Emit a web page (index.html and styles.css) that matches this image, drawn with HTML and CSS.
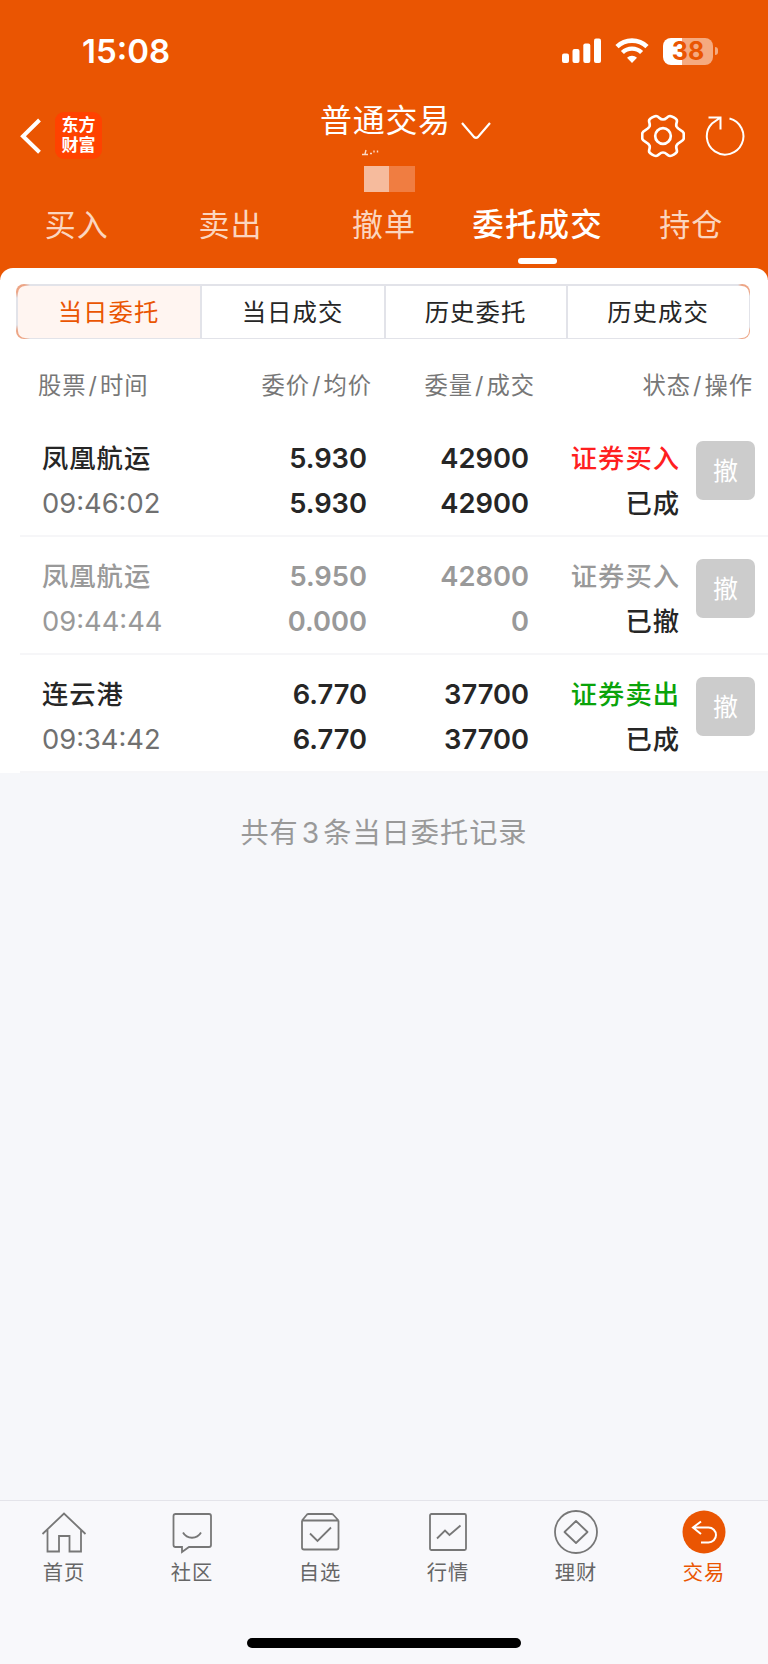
FILE: index.html
```
<!DOCTYPE html>
<html lang="zh-CN">

<head>
  <meta charset="UTF-8">
  <meta name="viewport" content="width=device-width, initial-scale=1.0">
  <title>委托成交</title>
  <link rel="stylesheet" href="styles.css">
</head>

<body>
  <div class="app">
    <header class="header">
      <div class="status-bar">
        <span class="time">15:08</span>
        <div class="status-icons">
          <svg class="signal" width="40" height="26" viewBox="0 0 40 26" fill="#fff">
            <rect x="0" y="15.5" width="7" height="9.5" rx="2"/>
            <rect x="10.5" y="11" width="7" height="14" rx="2"/>
            <rect x="21.3" y="5.5" width="7" height="19.5" rx="2"/>
            <rect x="32" y="0.5" width="7" height="24.5" rx="2"/>
          </svg>
          <svg class="wifi" width="34" height="26" viewBox="0 0 34 26" fill="none" stroke="#fff">
            <path d="M2 8.7a21.5 21.5 0 0 1 30 0" stroke-width="4.6"/>
            <path d="M7.4 14.5a13.8 13.8 0 0 1 19.2 0" stroke-width="4.4"/>
            <path d="M17 25l-5-5.2a7.2 7.2 0 0 1 10 0z" fill="#fff" stroke="none"/>
          </svg>
          <div class="battery"><span>38</span></div>
          <div class="battery-cap"></div>
        </div>
      </div>

      <div class="nav">
        <div class="nav-left">
          <svg width="22" height="36" viewBox="0 0 22 36" fill="none" stroke="#fff" stroke-width="4">
            <path d="M20.500 2L4 18.200l16.500 16"/>
          </svg>
          <div class="logo"><span>东方</span><span>财富</span></div>
        </div>
        <div class="nav-center">
          <div class="nav-title">
            <span>普通交易</span>
            <svg width="30" height="18" viewBox="0 0 30 18" fill="none" stroke="#fff" stroke-width="2.200">
              <path d="M1 1l12 14q2 1.500 4 0L29 1"/>
            </svg>
          </div>
          <svg class="account" width="54" height="44" viewBox="0 0 54 44">
            <path d="M1 6.500h6M5 2l-1 4M9 5.500h2M13 2.500v2M16.500 2.500v2" fill="none" stroke="#fbd9c5" stroke-width="1.400"/>
            <rect x="3" y="18" width="25" height="26" fill="#f6bb9d"/>
            <rect x="28" y="18" width="26" height="26" fill="#f07d41"/>
          </svg>
        </div>
        <div class="nav-right">
          <svg width="44" height="44" viewBox="0 0 44 44" fill="none" stroke="#fff" stroke-width="2.700" stroke-linejoin="round">
            <path d="M22 5.500C25.500 5.500 26 2.200 29 2C31 2.200 34.800 4.300 35.800 6C36.500 8.500 34.500 9.500 35.500 12.500C37.500 16.500 42 16 42.800 19.500V24.500C42 28 37.500 27.500 35.500 31.500C34.500 34.500 36.500 35.500 35.800 38C34.800 39.700 31 41.800 29 42C26 41.800 25.500 38.500 22 38.500C18.500 38.500 18 41.800 15 42C13 41.800 9.200 39.700 8.200 38C7.500 35.500 9.500 34.500 8.500 31.500C6.500 27.500 2 28 1.200 24.500V19.500C2 16 6.500 16.500 8.500 12.500C9.500 9.500 7.500 8.500 8.200 6C9.200 4.300 13 2.200 15 2C18 2.200 18.500 5.500 22 5.500Z"/>
            <circle cx="22" cy="22" r="7.800"/>
          </svg>
          <svg width="42" height="42" viewBox="0 0 42 42" fill="none" stroke="#fff" stroke-width="2">
            <path d="M26.500 3.500A18.300 18.300 0 1 1 9 8.500L17.500 2.500M5.500 2.500H17.500V14.500"/>
          </svg>
        </div>
      </div>

      <div class="tabs">
        <div class="tab">买入</div>
        <div class="tab">卖出</div>
        <div class="tab">撤单</div>
        <div class="tab active">委托成交</div>
        <div class="tab">持仓</div>
      </div>
    </header>

    <main class="panel">
      <div class="segments">
        <div class="segment selected">当日委托</div>
        <div class="segment">当日成交</div>
        <div class="segment">历史委托</div>
        <div class="segment">历史成交</div>
      </div>

      <div class="list-head">
        <span>股票<i>/</i>时间</span>
        <span>委价<i>/</i>均价</span>
        <span>委量<i>/</i>成交</span>
        <span>状态<i>/</i>操作</span>
      </div>

      <div class="order">
        <div class="cell"><b>凤凰航运</b><span class="order-time">09:46:02</span></div>
        <div class="cell num"><b>5.930</b><b>5.930</b></div>
        <div class="cell num"><b>42900</b><b>42900</b></div>
        <div class="cell state"><b class="buy">证券买入</b><b>已成</b></div>
        <div class="cancel">撤</div>
      </div>
      <div class="order cancelled">
        <div class="cell"><b>凤凰航运</b><span class="order-time">09:44:44</span></div>
        <div class="cell num"><b>5.950</b><b>0.000</b></div>
        <div class="cell num"><b>42800</b><b>0</b></div>
        <div class="cell state"><b class="buy">证券买入</b><b>已撤</b></div>
        <div class="cancel">撤</div>
      </div>
      <div class="order">
        <div class="cell"><b>连云港</b><span class="order-time">09:34:42</span></div>
        <div class="cell num"><b>6.770</b><b>6.770</b></div>
        <div class="cell num"><b>37700</b><b>37700</b></div>
        <div class="cell state"><b class="sell">证券卖出</b><b>已成</b></div>
        <div class="cancel">撤</div>
      </div>
    </main>

    <p class="summary">共有<span>3</span>条当日委托记录</p>

    <footer class="tab-bar">
      <div class="bar-items">
        <div class="bar-item">
          <svg width="46" height="46" viewBox="0 0 46 46">
            <path d="M1.500 24L23 3.500L44.500 24M6.500 20v21.500H18V26h10.500v15.500H40V20"/>
          </svg>
          <span>首页</span>
        </div>
        <div class="bar-item">
          <svg width="46" height="46" viewBox="0 0 46 46">
            <path d="M6 4h34q2 0 2 2v29q0 2-2 2H20l-7 5v-5H6.500q-2 0-2-2V6q0-2 2-2z"/>
            <path d="M14 22.500c4 7 14 7 18 0"/>
          </svg>
          <span>社区</span>
        </div>
        <div class="bar-item">
          <svg width="46" height="46" viewBox="0 0 46 46">
            <path d="M5 10.500v27q0 2 2 2h32.500q2 0 2-2v-27M5 10.500h36.500M5 10.500l5-6q.5-.5 1.500-.5h23q1 0 1.500.5l5.500 6M13 23.500l7.500 7.500L34 17.500"/>
          </svg>
          <span>自选</span>
        </div>
        <div class="bar-item">
          <svg width="46" height="46" viewBox="0 0 46 46">
            <rect x="5" y="4" width="36" height="36" rx="1.500"/>
            <path d="M12 28.500l8-8 4.500 4.500L35.500 15.500"/>
          </svg>
          <span>行情</span>
        </div>
        <div class="bar-item">
          <svg width="46" height="46" viewBox="0 0 46 46">
            <circle cx="23" cy="22" r="21"/>
            <path d="M23 11l11.500 11L23 33L11.500 22z" stroke-linejoin="round"/>
          </svg>
          <span>理财</span>
        </div>
        <div class="bar-item current">
          <svg width="46" height="46" viewBox="0 0 46 46">
            <circle class="disc" cx="23" cy="22" r="21.500"/>
            <path class="arrow" d="M20 11.500L12 17.500l8 6.500M12 17.500h15.500a7.500 7.500 0 0 1 0 15H20"/>
          </svg>
          <span>交易</span>
        </div>
      </div>
      <div class="home-indicator"></div>
    </footer>
  </div>
</body>

</html>
```

FILE: styles.css
```
* {
  box-sizing: border-box;
}

body {
  margin: 0;
  font-family: Inter, "Noto Sans CJK SC", sans-serif;
  color: #262626;
}

svg {
  display: block;
  flex-shrink: 0;
}

.app {
  width: 768px;
  height: 1664px;
  display: flex;
  flex-direction: column;
  background: #f6f7fa;
  overflow: hidden;
}

/* header */
.header {
  height: 280px;
  flex-shrink: 0;
  background: #ea5502;
  color: #fff;
}

.status-bar {
  height: 102px;
  padding: 0 50px 0 82px;
  display: flex;
  align-items: center;
  justify-content: space-between;
}

.time {
  font-size: 33px;
  font-weight: 600;
}

.status-icons {
  display: flex;
  align-items: center;
}

.wifi {
  margin-left: 13px;
}

.battery {
  width: 50px;
  height: 27px;
  margin-left: 14px;
  border-radius: 8px;
  background: linear-gradient(90deg, #fff 39%, #f5aa80 39%);
  color: #ea5502;
  font-size: 25px;
  font-weight: 700;
  line-height: 27px;
  text-align: center;
}

.battery-cap {
  width: 3px;
  height: 8px;
  margin-left: 2px;
  border-radius: 0 4px 4px 0;
  background: #f5aa80;
}

.nav {
  height: 92px;
  display: grid;
  grid-template-columns: 320px 1fr 127px;
}

.nav-left {
  height: 68px;
  padding-left: 19px;
  display: flex;
  align-items: center;
  gap: 14px;
}

.logo {
  width: 47px;
  height: 47px;
  margin-top: -2px;
  display: flex;
  flex-direction: column;
  align-items: center;
  justify-content: center;
  border-radius: 9px;
  background: #ff4200;
  font-size: 17px;
  font-weight: 700;
  line-height: 20px;
}

.nav-title {
  height: 47px;
  display: flex;
  align-items: flex-start;
  font-size: 32px;
  line-height: 37px;
  letter-spacing: 0.7px;
}

.nav-title svg {
  margin: 20px 0 0 10px;
}

.account {
  margin: -1px 0 0 41px;
}

.nav-right {
  height: 68px;
  display: flex;
  align-items: center;
  gap: 18px;
}

.tabs {
  height: 74px;
  display: grid;
  grid-template-columns: repeat(5, 1fr);
}

.tab {
  display: flex;
  flex-direction: column;
  align-items: center;
  padding-top: 9px;
  color: #fbd5bf;
  font-size: 31px;
  line-height: 44px;
  letter-spacing: 1px;
}

.tab.active {
  color: #fff;
  font-size: 31.5px;
  font-weight: 500;
  letter-spacing: 1.2px;
}

.tab.active::after {
  content: "";
  width: 39px;
  height: 6px;
  margin-top: 11px;
  border-radius: 3px;
  background: #fff;
}

/* order list */
.panel {
  margin-top: -12px;
  padding-top: 16px;
  height: 505px;
  flex-shrink: 0;
  border-radius: 13px 13px 0 0;
  background: #fff;
}

/* grey frame whose rounded corners are tinted orange */
.segments {
  height: 55px;
  margin: 0 18px 0 16px;
  padding: 1.5px;
  display: grid;
  grid-template-columns: 184px 184px 182px 1fr;
  border-radius: 8px;
  background:
    radial-gradient(circle at 0 0, #eda585 8px, transparent 14px),
    radial-gradient(circle at 100% 0, #eda585 8px, transparent 12px),
    radial-gradient(circle at 0 100%, #eda585 8px, transparent 14px),
    radial-gradient(circle at 100% 100%, #eda585 8px, transparent 12px),
    #e2e3e9;
}

.segment {
  height: 52px;
  border-right: 2px solid #e2e3e9;
  background: #fff;
  font-size: 24.4px;
  line-height: 53px;
  letter-spacing: 1px;
  text-align: center;
}

.segment:first-child {
  border-radius: 7px 0 0 7px;
}

.segment:last-child {
  border-right: none;
  border-radius: 0 7px 7px 0;
}

.segment.selected {
  background: #fff5f1;
  color: #ea5502;
}

.list-head {
  height: 80px;
  padding: 0 15px 0 38px;
  display: grid;
  grid-template-columns: 170px 164px 163px 1fr;
  font-size: 23.3px;
  line-height: 94px;
  letter-spacing: 1px;
  text-align: right;
  color: #777;
}

.list-head span:first-child {
  text-align: left;
}

.list-head i {
  font-style: normal;
  margin: 0 2px;
}

.order {
  height: 118px;
  margin-left: 20px;
  padding: 17px 0 0 22px;
  display: grid;
  grid-template-columns: 175px 150px 162px 151px 59px;
  border-bottom: 2px solid #f6f6f8;
}

.cell {
  display: flex;
  flex-direction: column;
  font-size: 26.3px;
  line-height: 45px;
  letter-spacing: 1px;
}

.cell b {
  font-weight: 500;
}

.order-time {
  color: #707070;
  font-size: 27.3px;
  letter-spacing: 0;
}

.num {
  font-size: 27.3px;
  letter-spacing: 0;
  text-align: right;
}

.num b {
  font-weight: 600;
}

.state {
  text-align: right;
}

.buy {
  color: #ff1f1f;
}

.sell {
  color: #0aa30a;
}

.cancel {
  width: 59px;
  height: 59px;
  margin: 5px 0 0 16px;
  border-radius: 7px;
  background: #ccc;
  color: #fff;
  font-size: 25px;
  line-height: 60px;
  text-align: center;
}

.cancelled .cell,
.cancelled .order-time,
.cancelled .buy {
  color: #999;
}

.cancelled .state {
  color: #262626;
}

.summary {
  margin: 37px 0 0;
  font-size: 28.2px;
  line-height: 46px;
  letter-spacing: 1px;
  text-align: center;
  color: #999;
}

.summary span {
  margin: 0 3px;
}

/* bottom bar */
.tab-bar {
  height: 164px;
  margin-top: auto;
  border-top: 1px solid #e4e4ea;
  background: #f8f8fb;
}

.bar-items {
  height: 137px;
  display: grid;
  grid-template-columns: repeat(6, 1fr);
}

.bar-item {
  display: flex;
  flex-direction: column;
  align-items: center;
  padding-top: 9px;
  color: #666;
  font-size: 20.3px;
  line-height: 34px;
  letter-spacing: 1px;
}

.bar-item svg {
  fill: none;
  stroke: #777;
  stroke-width: 1.8;
}

.bar-item .disc {
  fill: #ea5502;
  stroke: none;
}

.bar-item .arrow {
  stroke: #fff;
  stroke-width: 2;
}

.bar-item.current {
  color: #ea5502;
}

.home-indicator {
  width: 274px;
  height: 10px;
  margin: 0 auto;
  border-radius: 5px;
  background: #000;
}
```
